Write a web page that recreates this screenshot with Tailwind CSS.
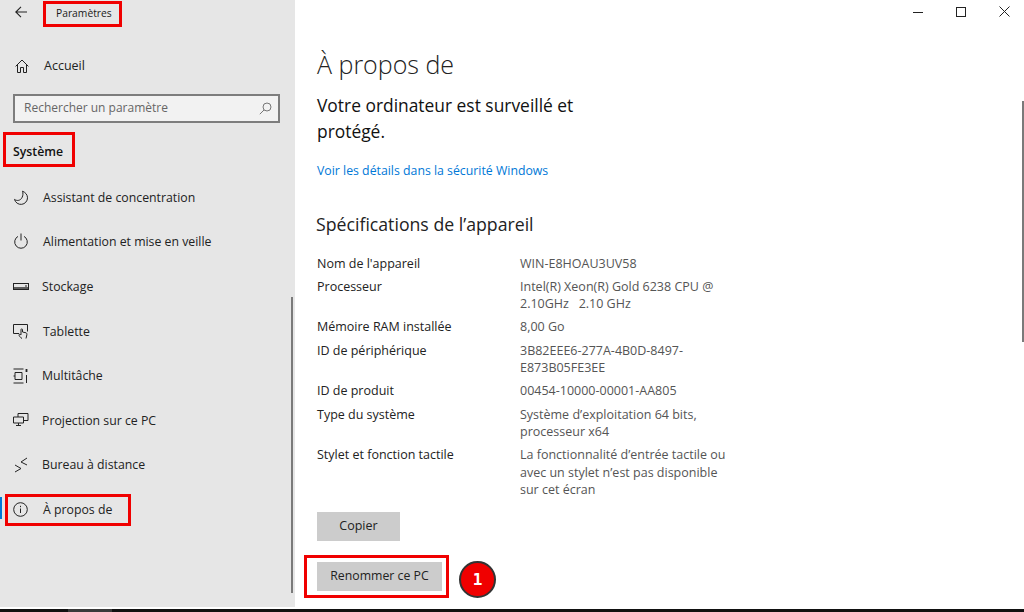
<!DOCTYPE html>
<html lang="fr">
<head>
  <meta charset="UTF-8" />
  <title>Paramètres</title>
  <script src="https://cdn.jsdelivr.net/npm/@tailwindcss/browser@4"></script>
</head>
<body class="w-[1024px] h-[612px] overflow-hidden bg-white text-[#1a1a1a] font-['Open_Sans','Noto_Sans',sans-serif]">
  <div class="flex h-[607px]">

    <!-- Sidebar -->
    <aside class="relative w-[295px] shrink-0 h-[607px] bg-[#e6e6e6] pt-[2px] pl-[14px]">
      <!-- Title bar -->
      <div class="flex items-center h-[20px]">
        <svg class="w-[12px] h-[12px] ml-[1px]" viewBox="0 0 12 12" fill="none" stroke="#222" stroke-width="1.1"><path d="M12 6H.8M6 .8.800 6 6 11.200"/></svg>
        <span class="ml-[29px] pt-[2px] text-[10.300px] leading-none">Paramètres</span>
      </div>

      <!-- Home -->
      <div class="flex items-center mt-[34px] h-[20px] text-[12.500px] text-[#222]">
        <svg class="w-[14px] h-[14px] ml-[1px]" viewBox="0 0 14 14" fill="none" stroke="#222" stroke-width="1"><path d="M.6 7.400 7 1l6.400 6.400M2.500 5.600v7.900h3V8.500h3v5h3V5.600"/></svg>
        <span class="ml-[15px]">Accueil</span>
      </div>

      <!-- Search -->
      <div class="flex items-center justify-between w-[267px] h-[29px] mt-[18px] ml-[-1px] border-2 border-[#7d7d7d] bg-[#f2f2f2] pl-[9px] pr-[6px] text-[12px] text-[#666]">
        <span class="pb-[2px]">Rechercher un paramètre</span>
        <svg class="w-[13px] h-[13px]" viewBox="0 0 13 13" fill="none" stroke="#777" stroke-width="1"><circle cx="8" cy="5" r="4"/><path d="M5 8 .8 12.200"/></svg>
      </div>

      <div class="mt-[19px] h-[20px] flex items-center text-[12.300px] font-semibold text-[#111] ml-[-1px]">Système</div>

      <!-- Nav items -->
      <nav class="mt-[26px] flex flex-col gap-[24.600px] text-[12.300px] text-[#222] ml-[-1px]">
        <div class="flex items-center h-[20px]">
          <svg class="w-[16px] h-[16px] shrink-0" viewBox="0 0 16 16" fill="none" stroke="#222" stroke-width="1"><path d="M9.500 1.200c3 1.200 5 3.600 5 6.600a6.600 6.600 0 0 1-13 1.600c1 .8 2.600 1.200 3.800 1 3.400-.4 5.600-5 4.200-9.200Z"/></svg>
          <span class="ml-[14px]">Assistant de concentration</span>
        </div>
        <div class="flex items-center h-[20px]">
          <svg class="w-[16px] h-[16px] shrink-0 -translate-y-[2px]" viewBox="0 0 16 16" fill="none" stroke="#222" stroke-width="1"><path d="M5 3.400a6.300 6.300 0 1 0 6 0M8 .5v7"/></svg>
          <span class="ml-[14px]">Alimentation et mise en veille</span>
        </div>
        <div class="flex items-center h-[20px]">
          <svg class="w-[16px] h-[16px] shrink-0" viewBox="0 0 16 16" fill="none" stroke="#222" stroke-width="1"><rect x=".5" y="4.500" width="15" height="6"/><path d="M1 9h14" stroke-width="1.400"/><path d="M12 7h2"/></svg>
          <span class="ml-[13px]">Stockage</span>
        </div>
        <div class="flex items-center h-[20px]">
          <svg class="w-[16px] h-[16px] shrink-0 -translate-y-[1px]" viewBox="0 0 16 16" fill="none" stroke="#222" stroke-width="1"><path d="M6 10.500H.5v-9h14v7M9 15.500c-1.600-1-3-2.600-3-3.600 0-.8 1-.8 2 0V6.600c0-1 1.500-1 1.500 0V9l3.500.8c1 .4 1 1.200.8 2.200L13 15.500"/></svg>
          <span class="ml-[14px]">Tablette</span>
        </div>
        <div class="flex items-center h-[20px]">
          <svg class="w-[16px] h-[16px] shrink-0" viewBox="0 0 16 16" fill="none" stroke="#222" stroke-width="1"><path d="M.5 1h10M.5 15h10M2 4.500h7v7H2zM.5 8H2M13.500 7v8"/><path d="M13.500 1v3" stroke-width="1.800"/></svg>
          <span class="ml-[13px]">Multitâche</span>
        </div>
        <div class="flex items-center h-[20px]">
          <svg class="w-[16px] h-[16px] shrink-0" viewBox="0 0 16 16" fill="none" stroke="#222" stroke-width="1"><path d="M5 4V.5h10v7h-4.500M.5 4h10v6H.5zM3 12.500h5M5.500 10v2.500"/></svg>
          <span class="ml-[13px]">Projection sur ce PC</span>
        </div>
        <div class="flex items-center h-[20px]">
          <svg class="w-[16px] h-[16px] shrink-0 -translate-y-[1px]" viewBox="0 0 16 16" fill="none" stroke="#222" stroke-width="1"><path d="m2 8 6 3.500L2 15M14 1 8 5l6 3"/></svg>
          <span class="ml-[13px]">Bureau à distance</span>
        </div>
        <div class="flex items-center h-[20px]">
          <svg class="w-[15px] h-[15px] shrink-0 -translate-y-[1px]" viewBox="0 0 15 15" fill="none" stroke="#222" stroke-width="1"><circle cx="7.500" cy="7.500" r="6.800"/><path d="M7.500 6.500v4.500M7.500 3.800v1.400"/></svg>
          <span class="ml-[15px]">À propos de</span>
        </div>
      </nav>

      <!-- Selected marker and scrollbar sit on top of the list -->
      <div class="absolute left-0 top-[497px] w-[2px] h-[22px] bg-[#0078d7]"></div>
      <div class="absolute left-[291px] top-[297px] w-[2px] h-[296px] bg-[#7a7a7a]"></div>

      <!-- Red highlight boxes -->
      <div class="absolute left-[43px] top-[1px] w-[79px] h-[26px] border-[3px] border-[#f00000]"></div>
      <div class="absolute left-[3px] top-[132px] w-[72px] h-[35px] border-[3px] border-[#f00000]"></div>
      <div class="absolute left-[5px] top-[494px] w-[126px] h-[32px] border-[3px] border-[#f00000]"></div>
    </aside>

    <!-- Main -->
    <main class="relative flex-1 pl-[22px]">
      <h1 class="mt-[46px] text-[25px] leading-[36px] font-light text-[#222]">À propos de</h1>
      <p class="mt-[10px] w-[300px] text-[17.400px] leading-[26px] text-[#111]">Votre ordinateur est surveillé et protégé.</p>
      <a class="block mt-[17px] text-[12.300px] leading-[20px] text-[#0078d7]">Voir les détails dans la sécurité Windows</a>
      <h2 class="mt-[30px] text-[17.700px] leading-[26px] text-[#222] ml-[-1px]">Spécifications de l’appareil</h2>

      <dl class="mt-[17px] grid grid-cols-[203px_216px] text-[12.500px] leading-[17px] text-[#222]">
        <dt class="min-h-[24px] pt-[1px]">Nom de l'appareil</dt>
        <dd class="min-h-[24px] pt-[1px] text-[#555]">WIN-E8HOAU3UV58</dd>
        <dt>Processeur</dt>
        <dd class="pb-[6px] text-[#555]">Intel(R) Xeon(R) Gold 6238 CPU @ 2.10GHz&nbsp;&nbsp; 2.10 GHz</dd>
        <dt class="min-h-[24px]">Mémoire RAM installée</dt>
        <dd class="min-h-[24px] text-[#555]">8,00 Go</dd>
        <dt>ID de périphérique</dt>
        <dd class="pb-[6px] text-[#555]">3B82EEE6-277A-4B0D-8497-E873B05FE3EE</dd>
        <dt class="min-h-[24px]">ID de produit</dt>
        <dd class="min-h-[24px] text-[#555]">00454-10000-00001-AA805</dd>
        <dt>Type du système</dt>
        <dd class="pb-[6px] text-[#555]">Système d’exploitation 64 bits, processeur x64</dd>
        <dt>Stylet et fonction tactile</dt>
        <dd class="text-[#555] leading-[17.500px]">La fonctionnalité d’entrée tactile ou avec un stylet n’est pas disponible sur cet écran</dd>
      </dl>

      <button class="block mt-[13px] w-[83px] h-[29px] bg-[#cccccc] text-[12.500px] text-[#222]">Copier</button>
      <button class="block mt-[21px] w-[125px] h-[29px] bg-[#cccccc] text-[12.300px] text-[#222]">Renommer ce PC</button>

      <!-- Annotations over the content -->
      <div class="absolute left-[9px] top-[555px] w-[145px] h-[43px] border-[3px] border-[#f00000]"></div>
      <div class="absolute left-[164px] top-[561px] w-[37px] h-[37px] rounded-full bg-[#f00000] border-2 border-[#333] flex items-center justify-center text-white font-bold text-[16px] font-['DejaVu_Sans_Mono',monospace]">1</div>

      <!-- Window controls -->
      <div class="absolute top-[6px] right-[14px] flex items-center gap-[33px]">
        <svg class="w-[10px] h-[10px]" viewBox="0 0 10 10" stroke="#222" fill="none"><path d="M0 5.500h10"/></svg>
        <svg class="w-[10px] h-[10px]" viewBox="0 0 10 10" stroke="#222" fill="none"><rect x=".5" y=".5" width="9" height="9"/></svg>
        <svg class="w-[11px] h-[11px]" viewBox="0 0 11 11" stroke="#222" fill="none"><path d="m.5.500 10 10M10.500.500l-10 10"/></svg>
      </div>

      <!-- Scrollbar -->
      <div class="absolute right-0 top-[101px] w-[2px] h-[241px] bg-[#7a7a7a]"></div>
    </main>
  </div>

  <!-- Taskbar strip cut off by the screenshot -->
  <div class="h-[2px] bg-white"></div>
  <div class="relative h-[3px] bg-[#111]">
    <div class="absolute left-[68px] top-0 w-[44px] h-[3px] bg-[#3a3a3a]"></div>
  </div>
</body>
</html>
